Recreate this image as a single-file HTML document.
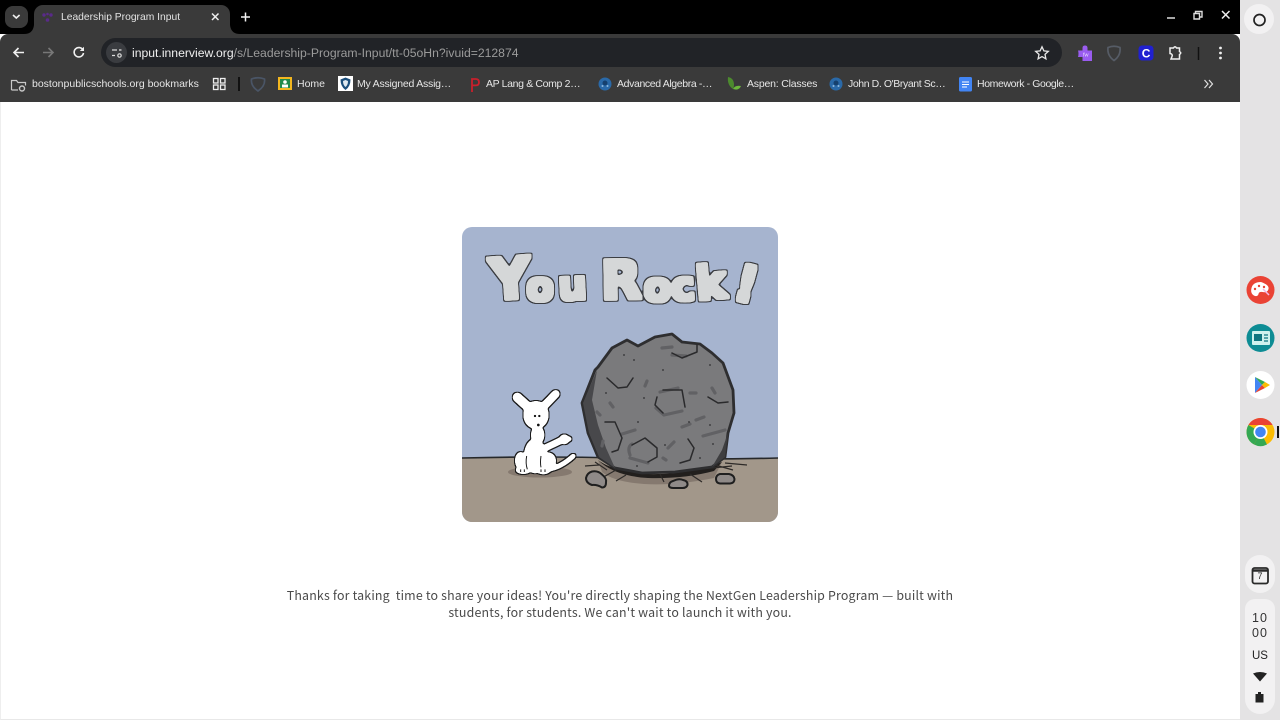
<!DOCTYPE html>
<html><head><meta charset="utf-8"><title>Leadership Program Input</title>
<style>
html,body{margin:0;padding:0;width:1280px;height:720px;overflow:hidden;background:#fff}
body{position:relative;font-family:"Liberation Sans",sans-serif}
#w{position:absolute;left:0;top:0;width:1280px;height:720px;filter:blur(.3px)}
.a{position:absolute;white-space:nowrap}
.bm{position:absolute;top:77px;font-size:10.5px;line-height:14px;color:#e6e6e6;white-space:nowrap}
svg{position:absolute;overflow:visible}
.msg{position:absolute;left:240px;width:760px;text-align:center;font-family:"Noto Sans CJK JP","Liberation Sans",sans-serif;font-size:12.4px;letter-spacing:.18px;line-height:17px;color:#4a4a4a;white-space:pre}
</style></head><body><div id="w">
<div class="a" style="left:0;top:0;width:1240px;height:34px;background:#000"></div>
<div class="a" style="left:0;top:34px;width:1240px;height:68px;background:#3a3a3a;border-radius:8px 8px 0 0"></div>
<div class="a" style="left:1240px;top:0;width:40px;height:720px;background:#e4e3e4"></div>
<div class="a" style="left:0;top:102px;width:1240px;height:618px;background:#fff;border-left:1px solid #eee;box-sizing:border-box;border-bottom:1px solid #e8e8e8"></div>

<!-- tabs -->
<div class="a" style="left:5px;top:6px;width:23px;height:22px;background:#3a3a3a;border-radius:8px"></div>
<svg style="left:0;top:0" width="40" height="34"><path d="M13 15l3.300 3 3.300-3" fill="none" stroke="#eee" stroke-width="1.600"/></svg>
<div class="a" style="left:34px;top:5px;width:196px;height:30px;background:#3a3a3a;border-radius:9px 9px 0 0"></div>
<svg style="left:0;top:0" width="240" height="40"><path d="M24 34q9 0 10-9v9zM230 25q1 9 10 9h-10z" fill="#3a3a3a"/><g fill="#5a2a8a"><circle cx="44" cy="15" r="1.700"/><circle cx="51" cy="15" r="1.700"/><circle cx="47.500" cy="20" r="1.800"/><circle cx="47.500" cy="14" r="1.300"/></g><path d="M212 13.500l6.500 6.500M218.500 13.500l-6.500 6.500" stroke="#eee" stroke-width="1.500"/><path d="M245.500 12.500v9M241 17h9" stroke="#f2f2f2" stroke-width="1.500"/></svg>
<div class="a" style="left:61px;top:11px;font-size:10.3px;line-height:14px;color:#e3e3e3">Leadership Program Input</div>

<!-- window controls -->
<svg style="left:1160px;top:5px" width="75" height="22"><path d="M7 13h8" stroke="#ddd" stroke-width="1.500"/><path d="M35.500 9V6.500h6.500V12h-2M34 8.500h5.500V14H34z" fill="none" stroke="#ddd" stroke-width="1.400"/><path d="M62 6l7.500 7.500M69.500 6L62 13.500" stroke="#eee" stroke-width="1.500"/></svg>

<!-- toolbar -->
<svg style="left:0;top:38px" width="100" height="30"><path d="M24 14.500H14M18.500 10l-4.500 4.500 4.500 4.500" fill="none" stroke="#f0f0f0" stroke-width="1.600"/><path d="M43 14.500h10M48.500 10l4.500 4.500-4.500 4.500" fill="none" stroke="#777" stroke-width="1.600"/><path d="M83 12a4.700 4.700 0 1 0 .5 3" fill="none" stroke="#f0f0f0" stroke-width="1.600"/><path d="M84 8.800v4.200h-4.200z" fill="#f0f0f0"/></svg>
<div class="a" style="left:101px;top:38px;width:961px;height:29px;background:#212327;border-radius:15px"></div>
<div class="a" style="left:106px;top:42px;width:21px;height:21px;background:#3a3c40;border-radius:50%"></div>
<svg style="left:106px;top:42px" width="21" height="21"><path d="M6 8h5M6 13.500h3" stroke="#ddd" stroke-width="1.300"/><circle cx="13.500" cy="13.500" r="1.700" fill="none" stroke="#ddd" stroke-width="1.200"/><path d="M13 8h2.500" stroke="#ddd" stroke-width="1.300"/></svg>
<div class="a" style="left:132px;top:45px;font-size:12.2px;line-height:16px;color:#9b9b9b"><span style="color:#f0f0f0">input.innerview.org</span>/s/Leadership-Program-Input/tt-05oHn?ivuid=212874</div>
<svg style="left:1033px;top:44px" width="18" height="18"><path d="M9 2.800l1.900 4.100 4.400.5-3.300 3 .9 4.400L9 12.600l-3.900 2.200.9-4.400-3.300-3 4.400-.5z" fill="none" stroke="#e8e8e8" stroke-width="1.300"/></svg>
<svg style="left:1075px;top:42px" width="160" height="22"><path d="M3 8.500H7.500V6q0-2.500 2.500-2.500T12.500 6v2.500H17V19H7.500v-4H3q1-3.500 0-6.500z" fill="#9a5cf0"/><text x="8" y="14.500" font-size="5.500" fill="#e8dcff" font-family="Liberation Sans">fw</text><path d="M33 5.500q6-2.500 12 0q1 8-6 13q-7-5-6-13z" fill="none" stroke="#565c66" stroke-width="1.700"/><rect x="63.500" y="3.500" width="15" height="15" rx="3.500" fill="#2020d0"/><text x="66.800" y="15.500" font-size="12" font-weight="bold" fill="#fff" font-family="Liberation Sans">C</text><path d="M95 6h3.500q1.500-2.500 3 0h3v3.500q2.500 1.500 0 3V17H96l1-2.500q1-2.500-2-3z" fill="none" stroke="#f0f0f0" stroke-width="1.500"/><path d="M123.500 5v13" stroke="#111" stroke-width="1.500"/><g fill="#f0f0f0"><circle cx="145.500" cy="6" r="1.400"/><circle cx="145.500" cy="11" r="1.400"/><circle cx="145.500" cy="16" r="1.400"/></g></svg>

<!-- bookmarks -->
<svg style="left:10px;top:76px" width="20" height="18"><path d="M1.500 14V4.500h5l1.500 2h7.500v3M1.500 14H8" fill="none" stroke="#c8c8c8" stroke-width="1.200"/><circle cx="12" cy="12.500" r="2.500" fill="none" stroke="#c8c8c8" stroke-width="1.400"/></svg>
<div class="bm" style="left:32px">bostonpublicschools.org bookmarks</div>
<svg style="left:212px;top:77px" width="16" height="14"><g fill="none" stroke="#eee" stroke-width="1.300"><rect x="1.500" y="1.500" width="4.500" height="4.500"/><rect x="8.500" y="1.500" width="4.500" height="4.500"/><rect x="1.500" y="8" width="4.500" height="4.500"/><rect x="8.500" y="8" width="4.500" height="4.500"/></g></svg>
<div class="a" style="left:238px;top:77px;width:1.500px;height:14px;background:#111"></div>
<svg style="left:250px;top:76px" width="16" height="16"><path d="M1.500 3q6.500-2.500 13 0q1 7-6.500 12q-7.500-5-6.500-12z" fill="none" stroke="#4a5566" stroke-width="1.700"/></svg>
<svg style="left:278px;top:77px" width="14" height="14"><rect width="14" height="13" fill="#f3b61f"/><rect x="2" y="2" width="10" height="9" fill="#1f8a4c"/><circle cx="7" cy="5" r="1.800" fill="#fff"/><rect x="4" y="7.500" width="6" height="3" fill="#fff"/></svg>
<div class="bm" style="left:297px">Home</div>
<svg style="left:338px;top:76px" width="15" height="16"><rect width="15" height="15" fill="#fff"/><path d="M7.500 1.500l5 2q0 7-5 10.500q-5-3.500-5-10.500z" fill="#1c4f7c"/><path d="M7.500 4l2.500 1q0 4-2.500 6q-2.500-2-2.500-6z" fill="#dfe9f0"/></svg>
<div class="bm" style="left:357px;letter-spacing:-.22px">My Assigned Assig…</div>
<svg style="left:468px;top:77px" width="14" height="15"><path d="M4 15V2h3.500q3.500 0 3.500 3.200T7.500 8.400H4" fill="none" stroke="#c8202c" stroke-width="1.800"/></svg>
<div class="bm" style="left:486px;letter-spacing:-.35px">AP Lang &amp; Comp 2…</div>
<svg style="left:598px;top:77px" width="14" height="14"><circle cx="7" cy="7" r="6.500" fill="#2a69a8"/><circle cx="7" cy="6" r="2.500" fill="#16406e"/><circle cx="4.500" cy="9" r="1" fill="#8fb8dd"/><circle cx="9.500" cy="9" r="1" fill="#8fb8dd"/></svg>
<div class="bm" style="left:617px;letter-spacing:-.37px">Advanced Algebra -…</div>
<svg style="left:727px;top:76px" width="15" height="16"><path d="M1 1q6 1 6 8q0 2-1 4Q0 9 1 1z" fill="#4c8a2e"/><path d="M6 13q2-4 8-3q-2 5-8 3z" fill="#6cb83c"/></svg>
<div class="bm" style="left:747px;letter-spacing:-.2px">Aspen: Classes</div>
<svg style="left:829px;top:77px" width="14" height="14"><circle cx="7" cy="7" r="6.500" fill="#2a69a8"/><circle cx="7" cy="6" r="2.500" fill="#16406e"/><circle cx="4.500" cy="9" r="1" fill="#8fb8dd"/><circle cx="9.500" cy="9" r="1" fill="#8fb8dd"/></svg>
<div class="bm" style="left:848px;letter-spacing:-.4px">John D. O'Bryant Sc…</div>
<svg style="left:959px;top:77px" width="14" height="15"><rect width="13" height="14.500" rx="1.500" fill="#4285f4"/><path d="M3 5h7M3 7.500h7M3 10h5" stroke="#fff" stroke-width="1.100"/></svg>
<div class="bm" style="left:977px;letter-spacing:-.39px">Homework - Google…</div>
<svg style="left:1203px;top:78px" width="12" height="12"><path d="M1.500 2l3.500 4-3.500 4M6 2l3.500 4L6 10" fill="none" stroke="#e0e0e0" stroke-width="1.200"/></svg>

<!-- illustration -->
<svg style="left:462px;top:227px" width="316" height="295" viewBox="462 227 316 295">
<defs>
<clipPath id="c"><rect x="462" y="227" width="316" height="295" rx="10"/></clipPath>
<filter id="chunk" x="-20%" y="-40%" width="140%" height="180%">
<feMorphology in="SourceAlpha" operator="dilate" radius="1.800" result="d1"/>
<feMorphology in="SourceAlpha" operator="dilate" radius="3" result="d2"/>
<feGaussianBlur in="d2" stdDeviation="0.800" result="b2"/>
<feComponentTransfer in="b2" result="s2"><feFuncA type="linear" slope="6" intercept="-2.500"/></feComponentTransfer>
<feGaussianBlur in="d1" stdDeviation="0.700" result="b1"/>
<feComponentTransfer in="b1" result="s1"><feFuncA type="linear" slope="6" intercept="-2.500"/></feComponentTransfer>
<feFlood flood-color="#3a3d42"/><feComposite in2="s2" operator="in" result="ol"/>
<feFlood flood-color="#d5d7d8"/><feComposite in2="s1" operator="in" result="fl"/>
<feMerge><feMergeNode in="ol"/><feMergeNode in="fl"/></feMerge>
</filter>
<filter id="blob" x="-20%" y="-20%" width="140%" height="140%">
<feGaussianBlur in="SourceAlpha" stdDeviation="1" result="b"/>
<feComponentTransfer in="b" result="shape"><feFuncA type="linear" slope="10" intercept="-4.500"/></feComponentTransfer>
<feMorphology in="shape" operator="dilate" radius="1.100" result="o"/>
<feFlood flood-color="#1c1c1c"/><feComposite in2="o" operator="in" result="ol"/>
<feFlood flood-color="#ffffff"/><feComposite in2="shape" operator="in" result="fl"/>
<feMerge><feMergeNode in="ol"/><feMergeNode in="fl"/></feMerge>
</filter>
</defs>
<g clip-path="url(#c)">
<rect x="462" y="227" width="316" height="295" fill="#a6b4cf"/>
<rect x="462" y="458" width="316" height="64" fill="#a2978a"/>
<path d="M462 458q80-2 160 0t156 0" fill="none" stroke="#26282a" stroke-width="1.600"/>
<g filter="url(#chunk)" font-family="'DejaVu Sans','Liberation Sans',sans-serif" font-weight="bold" fill="#000">
<text transform="translate(491,300) rotate(-4)" font-size="57">Y</text>
<text transform="translate(526,300) rotate(2)" font-size="40">o</text>
<text transform="translate(559,300) rotate(-3)" font-size="40">u</text>
<text transform="translate(601,299) rotate(-1)" font-size="53">R</text>
<text transform="translate(643,300) rotate(4)" font-size="40">o</text>
<text transform="translate(672,301) rotate(-4)" font-size="40">c</text>
<text transform="translate(697,300) rotate(-5)" font-size="46">k</text>
<text transform="translate(731,298) rotate(15)" font-size="50">!</text>
</g>
<!-- shadows -->
<ellipse cx="540" cy="472" rx="32" ry="5.500" fill="#85796f"/>
<path d="M598 460q12 12 50 16q40 3 74-14l-8 16q-40 8-70 6t-42-12z" fill="#85796f"/>
<path d="M598 460q14 11 50 14q40 1 74-12l-8 9q-30 8-66 7q-34-2-50-18z" fill="#221f1d"/>
<path d="M585 466l14-1M616 470l-16 9M690 474l12 8M626 475l-10 6M660 474l4 8M725 463l22 2M712 468l20-2M715 465l18 5M595 462l12 8" stroke="#2d2a28" stroke-width="1.200"/>
<!-- rock -->
<path d="M598 367 612 348 627 340 638 346 655 337 672 334 682 342 700 344 712 353 723 363 733 390 734 413 728 433 725 457 712 467 675 472 642 473 615 468 598 457 588 433 582 403 595 370Z" fill="#7a7a7c" stroke="#2e2e30" stroke-width="2.800" stroke-linejoin="round"/>
<path d="M597 370 583 403 589 433 599 457 615 468 606 448 598 425 592 400Z" fill="#48484b"/>
<path d="M712 467 725 457 728 433 722 450Z" fill="#3e3e40"/>
<g fill="none" stroke="#616164" stroke-width="3.200" stroke-linecap="round" stroke-linejoin="round">
<path d="M647 381l-2 5M610 403l3 4M597 412l3 3M690 393l6 0M712 388l3 5M603 441l-1 5M682 427l8-3M696 420l8-3M622 434l13-4M703 436l22-6M668 448l6-6M663 458l3 2M630 458l18 5M630 455q-3-8 2-11M656 408l8 7 18-4M672 355l14 1M662 348l10-1M660 392l18-4"/>
</g>
<g fill="none" stroke="#2a2a2c" stroke-width="1.500" stroke-linecap="round" stroke-linejoin="round">
<path d="M607 378 618 388 627 387 633 378M663 390 682 390 685 407M663 413 655 405 657 397M708 397 718 403 728 402M605 422 615 422 622 438 618 450 612 452M632 445 645 438 657 448 657 457 648 462M688 439 694 448 690 460 680 463M672 353 682 358 697 352 697 345"/>
</g>
<g fill="#2f2f31"><circle cx="606" cy="393" r=".9"/><circle cx="644" cy="398" r=".9"/><circle cx="638" cy="422" r=".9"/><circle cx="689" cy="422" r=".9"/><circle cx="710" cy="425" r=".9"/><circle cx="713" cy="444" r=".9"/><circle cx="637" cy="466" r=".9"/><circle cx="700" cy="458" r=".9"/><circle cx="665" cy="445" r=".9"/><circle cx="663" cy="370" r=".9"/><circle cx="634" cy="360" r=".9"/><circle cx="624" cy="355" r=".9"/><circle cx="710" cy="365" r=".9"/></g>
<!-- pebbles -->
<g fill="#8f8a88" stroke="#1f1f1f" stroke-width="2" stroke-linejoin="round">
<path d="M586 478q1-5 6-6.500q6-1 10 3q5 4 4 8q0 5-4 5q-5-3-10-2.500q-6-2-6-7z"/>
<path d="M669 486q0-4 4-5q6-3 10-1q5 1 4.500 5q-1 3-5 3h-9q-4 0-4.500-2z"/>
<path d="M716 479q0-4 4-5h9q5 1 5.500 5q0 4-4.500 4.500h-10q-4-.5-4-4.500z"/>
</g>
<!-- dog -->
<g filter="url(#blob)"><g transform="translate(455,370) scale(.3333)" fill="#000" stroke="#000" stroke-linecap="round">
<ellipse cx="243" cy="135" rx="38" ry="42" stroke="none"/>
<path d="M187 82 218 110" stroke-width="28" fill="none"/>
<path d="M302 72 270 105" stroke-width="24" fill="none"/>
<ellipse cx="248" cy="195" rx="20" ry="28" stroke="none"/>
<ellipse cx="240" cy="258" rx="33" ry="52" stroke="none"/>
<ellipse cx="197" cy="272" rx="17" ry="26" stroke="none"/>
<ellipse cx="205" cy="300" rx="23" ry="12" stroke="none"/>
<ellipse cx="278" cy="272" rx="25" ry="25" stroke="none"/>
<ellipse cx="265" cy="300" rx="22" ry="13" stroke="none"/>
<path d="M262 238 325 208" stroke-width="20" fill="none"/>
<circle cx="328" cy="208" r="15" stroke="none"/>
<circle cx="343" cy="207" r="7" stroke="none"/>
<path d="M285 297Q320 290 355 258" stroke-width="14" fill="none"/>
</g></g>
<g transform="translate(455,370) scale(.3333)">
<path d="M215 258q-4 22 2 40M258 258q-3 20 0 34M197 298v8M208 298v8M258 298v8M270 298v8" stroke="#1c1c1c" stroke-width="3" fill="none"/>
<circle cx="240" cy="138" r="3.500" fill="#111"/><circle cx="253" cy="138" r="3.500" fill="#111"/><circle cx="250" cy="165" r="4" fill="#111"/>
</g>
</g></svg>

<div class="msg" style="top:587px">Thanks for taking  time to share your ideas! You're directly shaping the NextGen Leadership Program — built with</div>
<div class="msg" style="top:604px">students, for students. We can't wait to launch it with you.</div>

<!-- right shelf -->
<div class="a" style="left:1244px;top:4px;width:30px;height:30px;border-radius:50%;background:#f2f1f2"></div>
<svg style="left:1240px;top:0" width="40" height="720">
<circle cx="19.500" cy="20" r="5.500" fill="none" stroke="#222" stroke-width="1.700"/>
<circle cx="20.500" cy="290" r="14" fill="#ea4335"/>
<path d="M21 282q-8 0-9.500 6t3.500 8q3 .5 3.500-2t4-2q5 1 6-3t-7.500-7z" fill="#fff"/><circle cx="19" cy="286" r="1.200" fill="#ea4335"/><circle cx="24" cy="287" r="1.200" fill="#ea4335"/><circle cx="15" cy="289" r="1.200" fill="#ea4335"/><path d="M23 289l6 6" stroke="#f4b8e8" stroke-width="1.500"/>
<circle cx="20.500" cy="338" r="14" fill="#0d8c94"/>
<rect x="12" y="331" width="18" height="14" rx="1" fill="#cdf1ee"/><rect x="14" y="334" width="8" height="7" fill="#0d7580"/><path d="M24 335h4M24 338h4M24 341h4" stroke="#0d7580" stroke-width="1.200"/>
<circle cx="20.500" cy="385" r="14" fill="#fff"/>
<path d="M15 377v8l7 0z" fill="#4285f4"/><path d="M15 393v-8l7 0z" fill="#4285f4"/><path d="M15 377l7 8 3-3z" fill="#34a853"/><path d="M15 393l7-8 3 3z" fill="#ea4335"/><path d="M25 382l5 3-5 3-3-3z" fill="#fbbc04"/>
<circle cx="20.500" cy="432" r="14" fill="#fbbc04"/>
<path d="M8.400 425A14 14 0 0 1 32.600 425H20.500z" fill="#ea4335"/><path d="M8.400 425A14 14 0 0 0 14 444.500L20.500 432z" fill="#34a853"/><path d="M14 444.500A14 14 0 0 0 27 444.500L20.500 432z" fill="#34a853"/>
<circle cx="20.500" cy="432" r="7" fill="#fff"/><circle cx="20.500" cy="432" r="5.300" fill="#4285f4"/>
<rect x="37" y="426" width="2" height="12" fill="#111"/>
</svg>
<div class="a" style="left:1245px;top:555px;width:30px;height:38px;background:#f2f1f2;border-radius:15px"></div>
<div class="a" style="left:1245px;top:599px;width:30px;height:115px;background:#f2f1f2;border-radius:10px 10px 15px 15px"></div>
<svg style="left:1240px;top:550px" width="40" height="170">
<rect x="12.500" y="18" width="15.500" height="15.500" rx="2" fill="none" stroke="#2a2a2a" stroke-width="1.800"/><path d="M12.500 20.500h15.500" stroke="#2a2a2a" stroke-width="2.500"/>
<path d="M13 123.500q7-3 14 0l-7 8z" fill="#222"/>
<path d="M15.500 144h8v8.500h-8z" fill="#222"/><rect x="18" y="142" width="3" height="2" fill="#222"/>
</svg>
<div class="a" style="left:1240px;width:40px;top:570px;text-align:center;font-size:9px;line-height:12px;color:#222">7</div>
<div class="a" style="left:1240px;width:40px;top:611px;text-align:center;font-size:12.500px;line-height:15px;color:#333;letter-spacing:1px">10<br>00</div>
<div class="a" style="left:1240px;width:40px;top:649px;text-align:center;font-size:11.500px;line-height:14px;color:#222">US</div>
</div></body></html>
